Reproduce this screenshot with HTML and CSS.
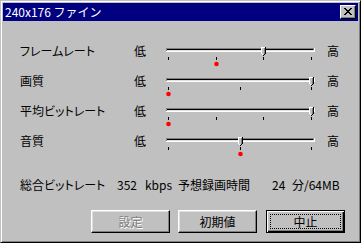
FILE: index.html
```html
<!DOCTYPE html>
<html lang="ja">
<head>
    <meta charset="UTF-8">
    <title>240x176 ファイン</title>
    <link rel="stylesheet" href="styles.css">
</head>
<body>
    <svg class="defs" width="0" height="0">
        <defs>
            <g id="thumb" shape-rendering="crispEdges">
                <rect x="0" y="0" width="4" height="1" fill="#fff"/>
                <rect x="0" y="1" width="1" height="6" fill="#fff"/>
                <rect x="1" y="7" width="1" height="1" fill="#fff"/>
                <rect x="1" y="1" width="2" height="6" fill="#c0c0c0"/>
                <rect x="2" y="7" width="1" height="1" fill="#c0c0c0"/>
                <rect x="3" y="1" width="1" height="6" fill="#808080"/>
                <rect x="4" y="0" width="1" height="7" fill="#000"/>
                <rect x="3" y="7" width="1" height="1" fill="#000"/>
                <rect x="2" y="8" width="1" height="1" fill="#000"/>
            </g>
            <g id="track" shape-rendering="crispEdges">
                <rect x="2" y="4" width="149" height="4" fill="#fff"/>
                <rect x="2" y="4" width="148" height="3" fill="#808080"/>
                <rect x="3" y="5" width="146" height="1" fill="#000"/>
                <rect x="3" y="6" width="147" height="1" fill="#dfdfdf"/>
            </g>
        </defs>
    </svg>

    <div class="window">
        <div class="titlebar">
            <span class="title">240x176 ファイン</span>
            <div class="close">
                <svg width="8" height="7" viewBox="0 0 8 7" shape-rendering="crispEdges">
                    <path d="M0 0h2v1H0zM6 0h2v1H6zM1 1h2v1H1zM5 1h2v1H5zM2 2h4v1H2zM3 3h2v1H3zM2 4h4v1H2zM1 5h2v1H1zM5 5h2v1H5zM0 6h2v1H0zM6 6h2v1H6z" fill="#000"/>
                </svg>
            </div>
        </div>

        <div class="content">
            <div class="row">
                <span class="name">フレームレート</span>
                <span class="lo">低</span>
                <svg class="slider" width="152" height="23" shape-rendering="crispEdges">
                    <use href="#track"/>
                    <rect x="4" y="13" width="1" height="3"/>
                    <rect x="52" y="13" width="1" height="3"/>
                    <rect x="99" y="13" width="1" height="3"/>
                    <rect x="147" y="13" width="1" height="3"/>
                    <use href="#thumb" x="97" y="3"/>
                    <circle cx="52.5" cy="20" r="2.3" fill="#f00" shape-rendering="auto"/>
                </svg>
                <span class="hi">高</span>
            </div>
            <div class="row">
                <span class="name">画質</span>
                <span class="lo">低</span>
                <svg class="slider" width="152" height="23" shape-rendering="crispEdges">
                    <use href="#track"/>
                    <rect x="4" y="13" width="1" height="3"/>
                    <rect x="76" y="13" width="1" height="3"/>
                    <rect x="147" y="13" width="1" height="3"/>
                    <use href="#thumb" x="145" y="3"/>
                    <circle cx="4.5" cy="20" r="2.3" fill="#f00" shape-rendering="auto"/>
                </svg>
                <span class="hi">高</span>
            </div>
            <div class="row">
                <span class="name">平均ビットレート</span>
                <span class="lo">低</span>
                <svg class="slider" width="152" height="23" shape-rendering="crispEdges">
                    <use href="#track"/>
                    <rect x="4" y="13" width="1" height="3"/>
                    <rect x="52" y="13" width="1" height="3"/>
                    <rect x="99" y="13" width="1" height="3"/>
                    <rect x="147" y="13" width="1" height="3"/>
                    <use href="#thumb" x="145" y="3"/>
                    <circle cx="4.5" cy="20" r="2.3" fill="#f00" shape-rendering="auto"/>
                </svg>
                <span class="hi">高</span>
            </div>
            <div class="row">
                <span class="name">音質</span>
                <span class="lo">低</span>
                <svg class="slider" width="152" height="23" shape-rendering="crispEdges">
                    <use href="#track"/>
                    <rect x="4" y="13" width="1" height="3"/>
                    <rect x="76" y="13" width="1" height="3"/>
                    <rect x="147" y="13" width="1" height="3"/>
                    <use href="#thumb" x="74" y="3"/>
                    <circle cx="76.5" cy="20" r="2.3" fill="#f00" shape-rendering="auto"/>
                </svg>
                <span class="hi">高</span>
            </div>

            <div class="info">
                <span class="info-label">総合ビットレート</span>
                <span class="rate"><span class="num">352</span><span class="unit">kbps</span></span>
                <span class="info-label2">予想録画時間</span>
                <span class="mins">24</span>
                <span>分/64MB</span>
            </div>

            <div class="buttons">
                <button class="btn" disabled>設定</button>
                <button class="btn">初期値</button>
                <button class="btn default">中止</button>
            </div>
        </div>
    </div>
</body>
</html>
```

FILE: styles.css
```css
body {
    margin: 0;
    background-color: #c0c0c0;
    font-family: "Noto Sans CJK JP", "DejaVu Sans", sans-serif;
    font-size: 12px;
    color: #000;
}
.defs {
    position: absolute;
    width: 0;
    height: 0;
}
.window {
    width: 361px;
    height: 243px;
    box-sizing: border-box;
    border: 1px solid;
    border-color: #c0c0c0 #000 #000 #c0c0c0;
    box-shadow: inset 1px 1px #fff, inset -1px -1px #808080;
    padding: 2px;
    background-color: #c0c0c0;
}
.titlebar {
    height: 18px;
    background-color: #000080;
    color: #fff;
    display: flex;
    align-items: center;
    justify-content: space-between;
    padding: 0 2px;
}
.title {
    line-height: 18px;
}
.close {
    width: 16px;
    height: 14px;
    box-sizing: border-box;
    background-color: #c0c0c0;
    border: 1px solid;
    border-color: #fff #000 #000 #fff;
    box-shadow: inset -1px -1px #808080;
    padding: 2px 0 0 3px;
}
.close svg {
    display: block;
}
.content {
    padding: 15px 0 0 17px;
}
.row {
    display: flex;
    align-items: flex-start;
    height: 30px;
    line-height: 30px;
}
.name {
    width: 114px;
    font-feature-settings: "palt";
}
.lo {
    width: 30px;
}
.slider {
    display: block;
    margin-top: 8px;
    overflow: visible;
}
.hi {
    margin-left: 11px;
}
.info {
    display: flex;
    margin-top: 19px;
    height: 20px;
    line-height: 20px;
    font-feature-settings: "palt";
}
.info-label {
    width: 97px;
}
.rate {
    width: 61px;
}
.unit {
    margin-left: 8px;
}
.info-label2 {
    width: 94px;
}
.mins {
    width: 20px;
}
.buttons {
    display: flex;
    gap: 8px;
    margin-top: 15px;
    padding-left: 71px;
}
.btn {
    width: 79px;
    height: 23px;
    box-sizing: border-box;
    background-color: #c0c0c0;
    border: 1px solid;
    border-color: #fff #000 #000 #fff;
    box-shadow: inset -1px -1px #808080, inset 1px 1px #dfdfdf;
    font-family: inherit;
    font-size: 12px;
    color: #000;
    padding: 0;
    line-height: 20px;
}
.btn:disabled {
    color: #808080;
    text-shadow: 1px 1px 0 #fff;
}
.btn.default {
    margin-left: 1px;
    border-color: #000;
    box-shadow: inset 1px 1px #fff, inset -1px -1px #000, inset -2px -2px #808080;
    outline: 1px dotted #000;
    outline-offset: -5px;
}
```
